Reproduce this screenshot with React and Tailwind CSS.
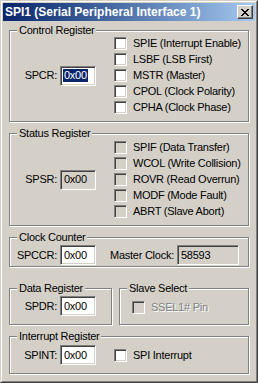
import React from "react";

const Check = ({ disabled }) => (
    <span
        className={`block w-[13px] h-[13px] shrink-0 border border-t-[#808080] border-l-[#808080] border-b-white border-r-white shadow-[inset_1px_1px_0_#404040,inset_-1px_-1px_0_#d4d0c8] ${
            disabled ? "bg-[#d4d0c8]" : "bg-white"
        }`}
    />
);

const CheckRow = ({ label, disabled, grey }) => (
    <div className="flex items-center h-[13px] gap-[6px]">
        <Check disabled={disabled} />
        <span
            className={
                grey
                    ? "text-[#808080] [text-shadow:1px_1px_0_#fff] leading-[13px] whitespace-nowrap"
                    : "leading-[13px] whitespace-nowrap"
            }
        >
            {label}
        </span>
    </div>
);

const Edit = ({ value, disabled, selected, width = "w-[36px]" }) => (
    <div
        className={`${width} h-[20px] shrink-0 flex items-center pl-[2px] border border-t-[#808080] border-l-[#808080] border-b-white border-r-white shadow-[inset_1px_1px_0_#404040,inset_-1px_-1px_0_#d4d0c8] ${
            disabled ? "bg-[#d4d0c8]" : "bg-white"
        }`}
    >
        <span
            className={
                selected
                    ? "bg-[#0a246a] text-white leading-[13px] px-px"
                    : "leading-[13px] px-px"
            }
        >
            {value}
        </span>
    </div>
);

const Group = ({ title, className, children }) => (
    <fieldset
        className={`border border-[#808080] shadow-[inset_1px_1px_0_#fff,1px_1px_0_#fff] ${className}`}
    >
        <legend className="ml-[7px] px-[2px] leading-[13px] bg-[#d4d0c8]">
            {title}
        </legend>
        {children}
    </fieldset>
);

const App = () => {
    return (
        <div className="w-[258px] h-[383px] bg-[#d4d0c8] text-black text-[11px] tracking-[-0.25px] font-['Liberation_Sans',Arial,sans-serif] border border-t-[#d4d0c8] border-l-[#d4d0c8] border-b-[#404040] border-r-[#404040]">
            <div className="h-full border border-t-white border-l-white border-b-[#808080] border-r-[#808080] p-px flex flex-col">
                {/* title bar */}
                <div className="h-[18px] shrink-0 flex items-center justify-between bg-linear-to-r from-[#0a246a] to-[#a6caf0] pl-[2px] pr-[2px]">
                    <span className="text-white font-bold text-[12px] tracking-normal leading-[14px] whitespace-nowrap">
                        SPI1 (Serial Peripheral Interface 1)
                    </span>
                    <div className="w-[16px] h-[14px] bg-[#d4d0c8] border border-t-white border-l-white border-b-[#404040] border-r-[#404040] shadow-[inset_-1px_-1px_0_#808080] flex items-center justify-center">
                        <svg width="8" height="7" viewBox="0 0 8 7" shapeRendering="crispEdges">
                            <path
                                d="M0 0h2v1H0zM6 0h2v1H6zM1 1h2v1H1zM5 1h2v1H5zM2 2h4v1H2zM3 3h2v1H3zM2 4h4v1H2zM1 5h2v1H1zM5 5h2v1H5zM0 6h2v1H0zM6 6h2v1H6z"
                                fill="#000"
                            />
                        </svg>
                    </div>
                </div>

                <div className="flex flex-col px-[6px] pt-[3px] gap-[5px]">
                    <Group title="Control Register" className="h-[98px]">
                        <div className="flex">
                            <div className="w-[104px] flex items-center justify-end pr-[18px] gap-[3px]">
                                <span>SPCR:</span>
                                <Edit value="0x00" selected />
                            </div>
                            <div className="flex flex-col gap-[3px]">
                                <CheckRow label="SPIE (Interrupt Enable)" />
                                <CheckRow label="LSBF (LSB First)" />
                                <CheckRow label="MSTR (Master)" />
                                <CheckRow label="CPOL (Clock Polarity)" />
                                <CheckRow label="CPHA (Clock Phase)" />
                            </div>
                        </div>
                    </Group>

                    <Group title="Status Register" className="h-[99px]">
                        <div className="flex pt-px">
                            <div className="w-[104px] flex items-center justify-end pr-[18px] gap-[3px]">
                                <span>SPSR:</span>
                                <Edit value="0x00" disabled />
                            </div>
                            <div className="flex flex-col gap-[3px]">
                                <CheckRow label="SPIF (Data Transfer)" disabled />
                                <CheckRow label="WCOL (Write Collision)" disabled />
                                <CheckRow label="ROVR (Read Overrun)" disabled />
                                <CheckRow label="MODF (Mode Fault)" disabled />
                                <CheckRow label="ABRT (Slave Abort)" disabled />
                            </div>
                        </div>
                    </Group>

                    <Group title="Clock Counter" className="h-[36px]">
                        <div className="flex items-center pt-[1px]">
                            <div className="w-[86px] flex items-center justify-end gap-[3px]">
                                <span>SPCCR:</span>
                                <Edit value="0x00" />
                            </div>
                            <span className="ml-[14px]">Master Clock:</span>
                            <div className="ml-[3px]">
                                <Edit value="58593" disabled width="w-[62px]" />
                            </div>
                        </div>
                    </Group>

                    <div className="flex gap-[7px] mt-[10px]">
                        <Group title="Data Register" className="w-[103px] h-[43px]">
                            <div className="flex items-center justify-end pr-[15px] gap-[3px] pt-px">
                                <span>SPDR:</span>
                                <Edit value="0x00" />
                            </div>
                        </Group>
                        <Group title="Slave Select" className="flex-1 h-[43px]">
                            <div className="pl-[12px] pt-[6px]">
                                <CheckRow label="SSEL1# Pin" disabled grey />
                            </div>
                        </Group>
                    </div>

                    <Group title="Interrupt Register" className="h-[44px]">
                        <div className="flex items-center pt-[2px]">
                            <div className="w-[86px] flex items-center justify-end gap-[3px]">
                                <span>SPINT:</span>
                                <Edit value="0x00" />
                            </div>
                            <div className="ml-[18px]">
                                <CheckRow label="SPI Interrupt" />
                            </div>
                        </div>
                    </Group>
                </div>
            </div>
        </div>
    );
};

export default App;
